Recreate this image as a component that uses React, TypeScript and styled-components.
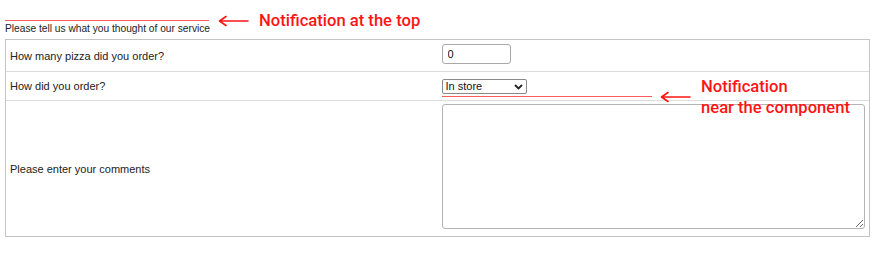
import styled, { createGlobalStyle } from 'styled-components';

const GlobalStyle = createGlobalStyle`
  html, body {
    margin: 0;
    padding: 0;
    background: #fff;
  }
  body {
    font-family: "Liberation Sans", Arial, sans-serif;
    color: #222;
  }
`;

const Page = styled.div`
  position: relative;
  width: 876px;
  height: 260px;
  padding: 20px 6px 0 5px;
  box-sizing: border-box;
`;

const NotificationBar = styled.div<{ $width: number; $gap?: number }>`
  width: ${p => p.$width}px;
  height: 0;
  margin-top: ${p => p.$gap ?? 0}px;
  border-top: 1px solid #ff5a5a;
`;

const Intro = styled.div`
  font-size: 10.2px;
  line-height: 14px;
  padding-top: 1px;
  margin-bottom: 3px;
`;

const Form = styled.div`
  display: grid;
  grid-template-columns: 1fr 1fr;
  border: 1px solid #c4c4c4;
`;

const Row = styled.div<{ $height: number }>`
  display: contents;
  & > div {
    height: ${p => p.$height}px;
  }
`;

const LabelCell = styled.div<{ $last?: boolean }>`
  display: flex;
  align-items: center;
  box-sizing: border-box;
  padding: 0 4px;
  font-size: 11px;
  border-bottom: ${p => (p.$last ? 'none' : '1px solid #dcdcdc')};
`;

const FieldCell = styled.div<{ $last?: boolean; $top: number }>`
  display: flex;
  flex-direction: column;
  align-items: flex-start;
  padding: ${p => p.$top}px 4px 0 4px;
  box-sizing: border-box;
  border-bottom: ${p => (p.$last ? 'none' : '1px solid #dcdcdc')};
`;

const NumberInput = styled.input`
  display: block;
  width: 69px;
  height: 20px;
  box-sizing: border-box;
  border: 1px solid #a8a8a8;
  border-radius: 3px;
  padding: 0 5px;
  font-family: "Liberation Sans", Arial, sans-serif;
  font-size: 11px;
  color: #111;
  outline: none;
`;

const SelectWrap = styled.div`
  position: relative;
  width: 85px;
`;

const Select = styled.select`
  display: block;
  appearance: none;
  width: 85px;
  height: 15px;
  box-sizing: border-box;
  font-family: "Liberation Sans", Arial, sans-serif;
  font-size: 11px;
  line-height: 13px;
  color: #111;
  background: #fff;
  padding: 0 0 0 3px;
  margin: 0;
  border: 1px solid #8a8a8a;
  border-radius: 2px;
  outline: none;
`;

const Chevron = styled.svg`
  position: absolute;
  right: 4px;
  top: 5px;
  pointer-events: none;
`;

const Comments = styled.textarea`
  display: block;
  width: 423px;
  height: 125px;
  box-sizing: border-box;
  border: 1px solid #b4b4b4;
  border-radius: 3px;
  resize: both;
  outline: none;
  margin: 0;
`;

const Annotation = styled.div<{ $x: number; $y: number }>`
  position: absolute;
  left: ${p => p.$x}px;
  top: ${p => p.$y}px;
  display: flex;
  align-items: center;
  gap: 10px;
`;

const AnnotationText = styled.div`
  font-family: Roboto, "Liberation Sans", sans-serif;
  font-weight: 500;
  font-size: 16.6px;
  line-height: 21px;
  color: #ff1414;
  white-space: pre;
`;

const Arrow = () => (
  <svg width="31" height="12" viewBox="0 0 31 12">
    <path
      d="M30 6H2M8 1.5L1.5 6L8 10.5"
      fill="none"
      stroke="#ff1414"
      strokeWidth="1.6"
      strokeLinecap="round"
      strokeLinejoin="round"
    />
  </svg>
);

export default function App() {
  return (
    <>
      <GlobalStyle />
      <Page>
        <NotificationBar $width={204} />
        <Intro>Please tell us what you thought of our service</Intro>
        <Form>
          <Row $height={32}>
            <LabelCell>How many pizza did you order?</LabelCell>
            <FieldCell $top={4}>
              <NumberInput type="text" defaultValue="0" />
            </FieldCell>
          </Row>
          <Row $height={29}>
            <LabelCell>How did you order?</LabelCell>
            <FieldCell $top={7}>
              <SelectWrap>
                <Select defaultValue="store">
                  <option value="store">In store</option>
                  <option value="phone">By phone</option>
                  <option value="online">Online</option>
                </Select>
                <Chevron width="9" height="6" viewBox="0 0 9 6">
                  <path d="M1 1L4.5 4.5L8 1" fill="none" stroke="#222" strokeWidth="1.8" />
                </Chevron>
              </SelectWrap>
              <NotificationBar $width={210} $gap={2} />
            </FieldCell>
          </Row>
          <Row $height={135}>
            <LabelCell $last>Please enter your comments</LabelCell>
            <FieldCell $last $top={3}>
              <Comments />
            </FieldCell>
          </Row>
        </Form>
        <Annotation $x={218} $y={10}>
          <Arrow />
          <AnnotationText>Notification at the top</AnnotationText>
        </Annotation>
        <Annotation $x={660} $y={76}>
          <Arrow />
          <AnnotationText>{'Notification\nnear the component'}</AnnotationText>
        </Annotation>
      </Page>
    </>
  );
}
